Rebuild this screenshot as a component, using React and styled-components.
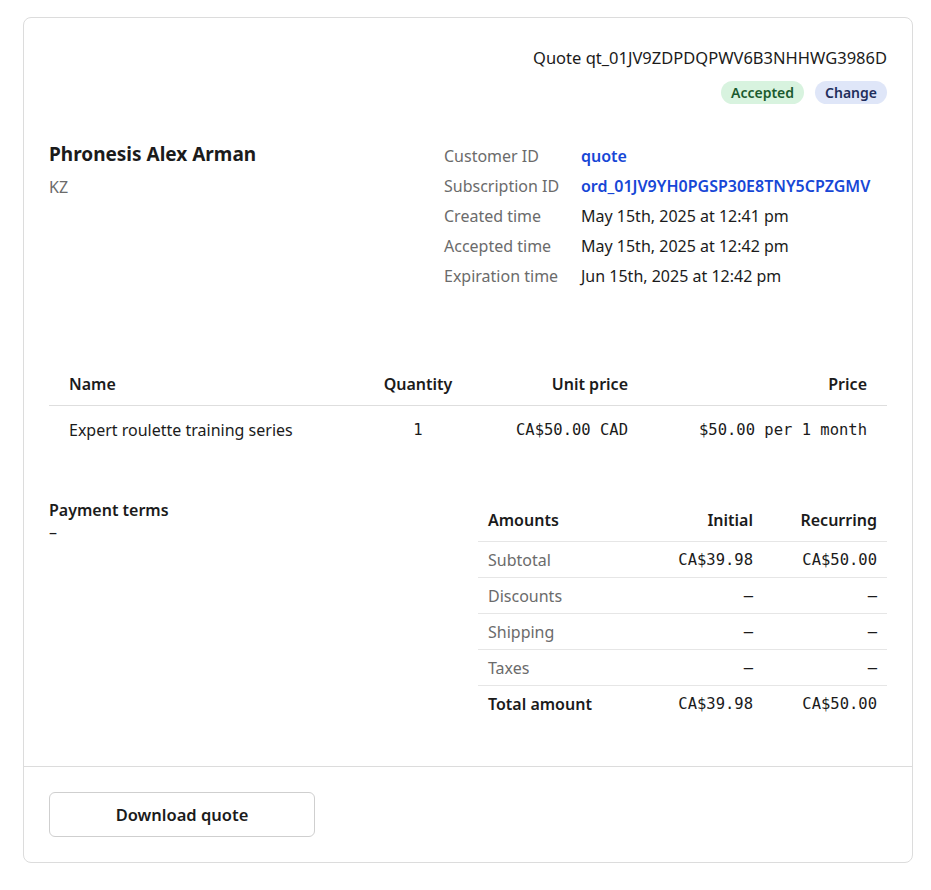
import styled, { createGlobalStyle } from "styled-components";

const mono = '"DejaVu Sans Mono", "Liberation Mono", monospace';

const GlobalStyle = createGlobalStyle`
  body {
    margin: 0;
    background: #ffffff;
    font-family: "Noto Sans", "Open Sans", sans-serif;
    color: #1b1b1b;
  }
`;

const Page = styled.main`
  padding: 17px 18px 27px 23px;
`;

const Card = styled.section`
  border: 1px solid #dcdcdc;
  border-radius: 8px;
  background: #fff;
`;

const Body = styled.div`
  padding: 27px 25px 45px;
`;

const Header = styled.header`
  display: flex;
  flex-direction: column;
  align-items: flex-end;
  gap: 10px;
`;

const QuoteId = styled.div`
  font-size: 16.5px;
  line-height: 26px;
`;

const Badges = styled.div`
  display: flex;
  gap: 11px;
`;

const Badge = styled.span`
  display: inline-flex;
  align-items: center;
  height: 23px;
  padding: 0 10px;
  border-radius: 12px;
  font-size: 14px;
  font-weight: 600;
  background: ${(p) => (p.$tone === "green" ? "#d8f3df" : "#dfe6f8")};
  color: ${(p) => (p.$tone === "green" ? "#1b5a2e" : "#1f2f5c")};
`;

const Details = styled.div`
  display: flex;
  justify-content: space-between;
  margin-top: 37px;
`;

const Customer = styled.div`
  display: flex;
  flex-direction: column;
  gap: 8px;
`;

const CustomerName = styled.div`
  font-size: 19px;
  font-weight: 700;
  line-height: 26px;
`;

const Muted = styled.div`
  font-size: 16px;
  color: #6b6b6b;
  line-height: 24px;
`;

const Meta = styled.dl`
  display: grid;
  grid-template-columns: 137px 306px;
  margin: 0;
  font-size: 16px;
  line-height: 30px;
`;

const MetaLabel = styled.dt`
  color: #6b6b6b;
`;

const MetaValue = styled.dd`
  margin: 0;
  white-space: nowrap;
  color: ${(p) => (p.$link ? "#1747d6" : "#1b1b1b")};
  font-weight: ${(p) => (p.$link ? 600 : 400)};
`;

const ItemsTable = styled.div`
  margin-top: 72px;
`;

const ItemRow = styled.div`
  display: grid;
  grid-template-columns: 309px 120px 170px 1fr;
  align-items: center;
  height: ${(p) => (p.$head ? "42px" : "47px")};
  border-bottom: ${(p) => (p.$head ? "1px solid #dedede" : "none")};
`;

const Cell = styled.div`
  padding: 0 20px;
  text-align: ${(p) => p.$align || "left"};
  font-weight: ${(p) => (p.$head ? 600 : 400)};
  font-family: ${(p) => (p.$mono ? mono : "inherit")};
  font-size: ${(p) => (p.$mono ? "15.5px" : "16px")};
`;

const Lower = styled.div`
  display: grid;
  grid-template-columns: 1fr 1fr;
  gap: 20px;
  margin-top: 45px;
`;

const Terms = styled.div`
  padding-top: 1px;
  line-height: 22px;
`;

const TermsTitle = styled.div`
  font-size: 16px;
  font-weight: 600;
`;

const Amounts = styled.div`
  display: flex;
  flex-direction: column;
`;

const AmountRow = styled.div`
  display: grid;
  grid-template-columns: 1fr 130px 124px;
  align-items: center;
  height: ${(p) => (p.$head ? "43px" : "35px")};
  border-bottom: ${(p) => (p.$last ? "none" : "1px solid #e6e6e6")};
`;

const AmountCell = styled.div`
  padding: 0 10px;
  text-align: ${(p) => (p.$right ? "right" : "left")};
  font-weight: ${(p) => (p.$bold ? 600 : 400)};
  color: ${(p) => (p.$muted ? "#6b6b6b" : "#1b1b1b")};
  font-family: ${(p) => (p.$mono ? mono : "inherit")};
  font-size: ${(p) => (p.$mono ? "15.5px" : "16px")};
`;

const Footer = styled.footer`
  border-top: 1px solid #dcdcdc;
  padding: 25px;
`;

const Button = styled.button`
  width: 266px;
  height: 45px;
  border: 1px solid #cfcfcf;
  border-radius: 6px;
  background: #fff;
  font-family: inherit;
  font-size: 16.5px;
  font-weight: 600;
  color: #1b1b1b;
`;

const meta = [
  ["Customer ID", "quote", true],
  ["Subscription ID", "ord_01JV9YH0PGSP30E8TNY5CPZGMV", true],
  ["Created time", "May 15th, 2025 at 12:41 pm"],
  ["Accepted time", "May 15th, 2025 at 12:42 pm"],
  ["Expiration time", "Jun 15th, 2025 at 12:42 pm"],
];

const amounts = [
  ["Subtotal", "CA$39.98", "CA$50.00"],
  ["Discounts", "–", "–"],
  ["Shipping", "–", "–"],
  ["Taxes", "–", "–"],
];

function App() {
  return (
    <Page>
      <GlobalStyle />
      <Card>
        <Body>
          <Header>
            <QuoteId>Quote qt_01JV9ZDPDQPWV6B3NHHWG3986D</QuoteId>
            <Badges>
              <Badge $tone="green">Accepted</Badge>
              <Badge $tone="blue">Change</Badge>
            </Badges>
          </Header>

          <Details>
            <Customer>
              <CustomerName>Phronesis Alex Arman</CustomerName>
              <Muted>KZ</Muted>
            </Customer>
            <Meta>
              {meta.map(([label, value, link]) => [
                <MetaLabel key={label}>{label}</MetaLabel>,
                <MetaValue key={label + "-v"} $link={link}>
                  {value}
                </MetaValue>,
              ])}
            </Meta>
          </Details>

          <ItemsTable>
            <ItemRow $head>
              <Cell $head>Name</Cell>
              <Cell $head $align="center">Quantity</Cell>
              <Cell $head $align="right">Unit price</Cell>
              <Cell $head $align="right">Price</Cell>
            </ItemRow>
            <ItemRow>
              <Cell>Expert roulette training series</Cell>
              <Cell $mono $align="center">1</Cell>
              <Cell $mono $align="right">CA$50.00 CAD</Cell>
              <Cell $mono $align="right">$50.00 per 1 month</Cell>
            </ItemRow>
          </ItemsTable>

          <Lower>
            <Terms>
              <TermsTitle>Payment terms</TermsTitle>
              <div>–</div>
            </Terms>
            <Amounts>
              <AmountRow $head>
                <AmountCell $bold>Amounts</AmountCell>
                <AmountCell $bold $right>Initial</AmountCell>
                <AmountCell $bold $right>Recurring</AmountCell>
              </AmountRow>
              {amounts.map(([label, initial, recurring]) => (
                <AmountRow key={label}>
                  <AmountCell $muted>{label}</AmountCell>
                  <AmountCell $mono $right>{initial}</AmountCell>
                  <AmountCell $mono $right>{recurring}</AmountCell>
                </AmountRow>
              ))}
              <AmountRow $last>
                <AmountCell $bold>Total amount</AmountCell>
                <AmountCell $mono $right>CA$39.98</AmountCell>
                <AmountCell $mono $right>CA$50.00</AmountCell>
              </AmountRow>
            </Amounts>
          </Lower>
        </Body>
        <Footer>
          <Button>Download quote</Button>
        </Footer>
      </Card>
    </Page>
  );
}

export default App;
